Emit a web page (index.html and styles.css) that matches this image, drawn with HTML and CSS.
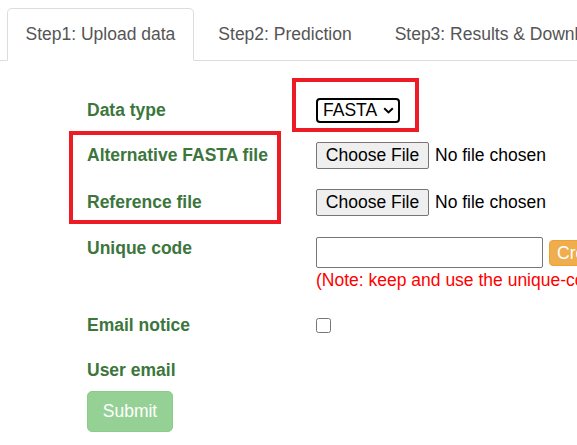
FILE: index.html
```html
<!DOCTYPE html>
<html lang="en">
<head>
<meta charset="utf-8">
<title>Upload data</title>
<link rel="stylesheet" href="styles.css">
</head>
<body>
<ul class="tabs">
  <li class="tab active">Step1: Upload data</li>
  <li class="tab">Step2: Prediction</li>
  <li class="tab">Step3: Results &amp; Download</li>
</ul>

<form class="form">
  <div class="row r1">
    <label class="lbl">Data type</label>
    <div class="ctl">
      <span class="select-wrap">
        <select class="select"><option>FASTA</option></select>
        <svg class="chev" width="11" height="7" viewBox="0 0 11 7"><path d="M1.2 1.2 L5.5 5.4 L9.8 1.2" fill="none" stroke="#000" stroke-width="2"/></svg>
      </span>
    </div>
  </div>
  <div class="row r2">
    <label class="lbl">Alternative FASTA file</label>
    <div class="ctl"><span class="filebtn">Choose File</span><span class="nofile">No file chosen</span></div>
  </div>
  <div class="row r3">
    <label class="lbl">Reference file</label>
    <div class="ctl"><span class="filebtn">Choose File</span><span class="nofile">No file chosen</span></div>
  </div>
  <div class="row r4">
    <label class="lbl lbl-top">Unique code</label>
    <div class="ctl ctl-col">
      <div class="code-line">
        <input class="text" type="text">
        <button type="button" class="btn-create">Create code</button>
      </div>
      <div class="note">(Note: keep and use the unique-code to retrieve your results)</div>
    </div>
  </div>
  <div class="row r5">
    <label class="lbl">Email notice</label>
    <div class="ctl"><input class="check" type="checkbox"></div>
  </div>
  <div class="row r6">
    <label class="lbl">User email</label>
    <div class="ctl"></div>
  </div>
  <button type="button" class="submit">Submit</button>
</form>

<div class="mark mark-select"></div>
<div class="mark mark-files"></div>
</body>
</html>
```
FILE: styles.css
```css
html, body {
  margin: 0;
  padding: 0;
  background: #fff;
  overflow: hidden;
}
body {
  font-family: "Liberation Sans", Arial, sans-serif;
  font-size: 17.5px;
  color: #333;
  width: 577px;
  height: 445px;
  position: relative;
}

.tabs {
  list-style: none;
  margin: 8px 0 0 0;
  padding: 0 0 0 7px;
  display: flex;
  border-bottom: 1px solid #ddd;
  white-space: nowrap;
}
.tab {
  flex: none;
  margin: 0 6px -1px 0;
  padding: 13px 17.5px;
  line-height: 25px;
  color: #555;
  border: 1px solid transparent;
  border-radius: 5px 5px 0 0;
}
.tab.active {
  background: #fff;
  border-color: #ddd;
  border-bottom-color: transparent;
}

.form {
  padding: 36px 0 0 87px;
  margin: 0;
}
.row {
  display: grid;
  grid-template-columns: 229px 1fr;
  align-items: center;
  white-space: nowrap;
}
.r1 { height: 25px; }
.r2 { height: 27px; margin-top: 20px; }
.r3 { height: 27px; margin-top: 20px; }
.r4 { margin-top: 21px; align-items: start; }
.r5 { height: 23px; margin-top: 21px; }
.r6 { height: 23px; margin-top: 22px; }

.lbl {
  font-weight: bold;
  color: #3c763d;
  line-height: 23px;
}
.r1 .lbl { line-height: 25px; padding-top: 1px; }
.lbl-top { line-height: 22px; }

.ctl { display: flex; align-items: center; }
.ctl-col { flex-direction: column; align-items: flex-start; }

.select-wrap {
  position: relative;
  display: inline-block;
}
.select {
  appearance: none;
  -webkit-appearance: none;
  display: block;
  width: 84px;
  height: 25px;
  box-sizing: border-box;
  border: 2px solid #000;
  border-radius: 4px;
  background: #fff;
  font: 17.5px "Liberation Sans", Arial, sans-serif;
  color: #000;
  padding: 0 0 0 5px;
  margin: 0;
  line-height: 21px;
}
.chev {
  position: absolute;
  right: 6px;
  top: 9px;
  pointer-events: none;
}

.filebtn {
  display: inline-block;
  box-sizing: border-box;
  width: 113px;
  height: 27px;
  line-height: 25px;
  text-align: center;
  background: #efefef;
  border: 1px solid #767676;
  border-radius: 2px;
  color: #000;
}
.nofile {
  margin-left: 6px;
  color: #000;
}

.code-line {
  display: flex;
  align-items: center;
  height: 31px;
}
.text {
  box-sizing: border-box;
  width: 227px;
  height: 31px;
  border: 1px solid #767676;
  border-radius: 2px;
  margin: 0;
  padding: 0 4px;
  font: 17.5px "Liberation Sans", Arial, sans-serif;
}
.btn-create {
  margin-left: 6px;
  height: 26px;
  box-sizing: border-box;
  padding: 0 7px;
  background: #f0ad4e;
  border: 1px solid #eea236;
  border-radius: 4px;
  color: #fff;
  font: 17.5px "Liberation Sans", Arial, sans-serif;
  line-height: 24px;
  white-space: nowrap;
  flex: none;
}
.note {
  color: #ff0000;
  line-height: 25px;
}

.check {
  width: 15px;
  height: 15px;
  margin: 0;
}

.submit {
  margin-top: 9px;
  height: 41px;
  width: 86px;
  box-sizing: border-box;
  padding: 0;
  background: #95d195;
  border: 1px solid #8acc8a;
  border-radius: 5px;
  color: #fff;
  font: 17.5px "Liberation Sans", Arial, sans-serif;
}

.mark {
  position: absolute;
  border: 4px solid #ed1c24;
  box-sizing: border-box;
  pointer-events: none;
}
.mark-select { left: 292px; top: 78px; width: 127px; height: 54px; }
.mark-files { left: 69px; top: 131px; width: 212px; height: 93px; }
```
